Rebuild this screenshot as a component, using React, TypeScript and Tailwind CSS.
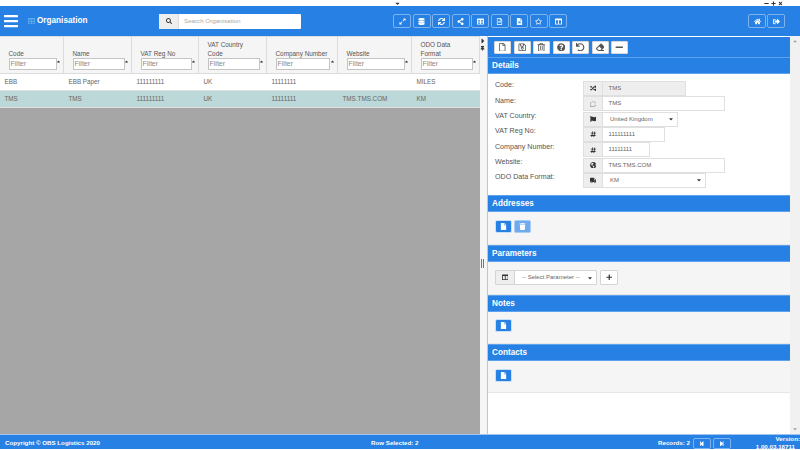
import React from "react";
import {
  FaSearch, FaExpandAlt, FaDatabase, FaSync, FaShareAlt, FaTable, FaRegFileAlt, FaFileAlt, FaRegStar, FaColumns,
  FaHome, FaSignOutAlt, FaRegFile, FaRegSave, FaRegTrashAlt, FaQuestionCircle, FaUndo, FaEraser, FaMinus, FaRandom,
  FaRegComment, FaFlag, FaHashtag, FaGlobeAmericas, FaTruck, FaFile, FaTrash, FaPlus, FaStepBackward, FaStepForward,
  FaCaretDown, FaCaretUp, FaCaretRight, FaThumbtack, FaBars, FaTimes,
} from "react-icons/fa";

const font = "font-['Liberation_Sans',Arial,sans-serif]";

const columns = [
  { w: "w-[64px]", f: "w-[48px]", label: ["Code"] },
  { w: "w-[68px]", f: "w-[52px]", label: ["Name"] },
  { w: "w-[67px]", f: "w-[51px]", label: ["VAT Reg No"] },
  { w: "w-[68px]", f: "w-[52px]", label: ["VAT Country", "Code"] },
  { w: "w-[71px]", f: "w-[54px]", label: ["Company Number"] },
  { w: "w-[74px]", f: "w-[58px]", label: ["Website"] },
  { w: "w-[68px]", f: "w-[52px]", label: ["ODO Data", "Format"] },
];

const rows = [
  { cells: ["EBB", "EBB Paper", "111111111", "UK", "11111111", "", "MILES"], bg: "bg-white" },
  { cells: ["TMS", "TMS", "111111111", "UK", "11111111", "TMS.TMS.COM", "KM"], bg: "bg-[#bdd8d8]" },
];

function TopButton({ children }: { children: React.ReactNode }) {
  return (
    <div className="flex h-[14px] w-[18px] items-center justify-center rounded-[2px] border border-[#7fb3ee] text-[7px] text-white">
      {children}
    </div>
  );
}

function ToolButton({ children }: { children: React.ReactNode }) {
  return (
    <div className="flex h-[13px] w-[17px] items-center justify-center rounded-[1px] border border-[#d8d8d8] bg-white text-[8.5px] text-[#555]">
      {children}
    </div>
  );
}

function SectionBar({ title }: { title: string }) {
  return (
    <div className="flex h-[17px] items-center border-y border-[#5da2ee] bg-[#2780e3] pl-[4px] pt-[1px] text-[8.2px] font-bold text-white">
      {title}
    </div>
  );
}

function BlueButton({ light, children }: { light?: boolean; children: React.ReactNode }) {
  return (
    <div
      className={`flex h-[13px] w-[17px] items-center justify-center rounded-[2px] border text-[7px] text-white ${
        light ? "border-[#a8cdf5] bg-[#6eaaed]" : "border-[#c9dff7] bg-[#2780e3]"
      }`}
    >
      {children}
    </div>
  );
}

function Field({
  label, icon, value, width, grey, select,
}: {
  label: string; icon: React.ReactNode; value: string; width: string; grey?: boolean; select?: boolean;
}) {
  return (
    <div className="flex h-[15.3px] items-center">
      <div className="w-[88px] -translate-y-[3.5px] text-[7.1px] text-[#555]">{label}</div>
      <div className={`flex h-[15px] ${width} border border-[#dfdfdf] ${grey ? "bg-[#eeeeee]" : "bg-white"}`}>
        <div className="flex w-[19px] shrink-0 items-center justify-center border-r border-[#dfdfdf] bg-[#eeeeee] text-[6.5px] text-[#333]">
          {icon}
        </div>
        <div className={`flex flex-1 items-center justify-between text-[6px] text-[#666] ${select ? "pl-[7px] pr-[3px]" : "pl-[5.5px]"}`}>
          <span>{value}</span>
          {select && <FaCaretDown className="text-[6px] text-[#333]" />}
        </div>
      </div>
    </div>
  );
}

export default function App() {
  return (
    <div className={`${font} flex h-[450px] w-[800px] flex-col overflow-hidden bg-white`}>
      <div className="flex h-[6px] items-center justify-between pl-[394px] pr-[17px] text-[#333]">
        <FaCaretDown className="text-[7px]" />
        <div className="flex items-center gap-[2px] text-[5px]">
          <FaMinus /><FaPlus /><FaTimes />
        </div>
      </div>

      <header className="flex h-[30px] items-center bg-[#2780e3] text-white">
        <FaBars className="ml-[4px] h-[16px] w-[14px]" />
        <div className="ml-[10px] flex w-[7px] justify-center text-[8px] text-[#59a8f0]"><FaTable /></div>
        <div className="ml-[2px] w-[122px] text-[8.2px] font-bold">Organisation</div>
        <div className="flex h-[15px] w-[142px] rounded-[1px] bg-white">
          <div className="flex w-[20px] items-center justify-center border-r border-[#ddd] bg-[#eee] text-[6px] text-[#333]">
            <FaSearch />
          </div>
          <div className="flex items-center pl-[5px] text-[6.2px] text-[#aaa]">Search Organisation</div>
        </div>
        <div className="ml-[92px] flex gap-[1.5px]">
          <TopButton><FaExpandAlt /></TopButton>
          <TopButton><FaDatabase /></TopButton>
          <TopButton><FaSync /></TopButton>
          <TopButton><FaShareAlt /></TopButton>
          <TopButton><FaTable /></TopButton>
          <TopButton><FaRegFileAlt /></TopButton>
          <TopButton><FaFileAlt /></TopButton>
          <TopButton><FaRegStar /></TopButton>
          <TopButton><FaColumns /></TopButton>
        </div>
        <div className="ml-[181px] flex gap-[1px]">
          <TopButton><FaHome /></TopButton>
          <TopButton><FaSignOutAlt /></TopButton>
        </div>
      </header>

      <main className="flex h-[398px]">
        <section className="flex w-[480px] flex-col bg-[#a6a6a6]">
          <div className="flex h-[38px] border-b border-t border-[#dcdcdc] bg-[#f5f5f5]">
            {columns.map((c) => (
              <div key={c.label[0]} className={`${c.w} relative flex flex-col justify-end border-r border-[#dcdcdc] pb-[3px] pl-[8.5px]`}>
                {c.label.map((l) => (
                  <div key={l} className="h-[9px] text-[6.4px] leading-[9px] text-[#555] whitespace-nowrap">{l}</div>
                ))}
                <div className={`${c.f} flex h-[12px] items-center border border-[#c4c4c4] bg-white pl-[1px] text-[7px] text-[#8a8a8a]`}>
                  Filter
                </div>
                <FaCaretUp className="absolute bottom-[9px] right-[2px] text-[5px] text-[#333]" />
              </div>
            ))}
          </div>
          {rows.map((r) => (
            <div key={r.cells[0]} className={`flex h-[17px] items-center border-b border-[#dedede] ${r.bg}`}>
              {r.cells.map((cell, i) => (
                <div key={i} className={`${columns[i].w} pl-[4.5px] text-[6.3px] text-[#666]`}>{cell}</div>
              ))}
            </div>
          ))}
        </section>

        <div className="flex w-[8px] flex-col items-center border-r border-[#c4c4c4] bg-[#f5f5f5] pt-[1px] text-[#333]">
          <FaCaretRight className="-translate-x-[1px] text-[8px]" />
          <FaThumbtack className="-translate-x-[1px] mt-[1px] text-[5px]" />
          <div className="-translate-x-[1px] mt-[208px] flex gap-[1px]">
            <div className="h-[9px] w-[1px] bg-[#777]" />
            <div className="h-[9px] w-[1px] bg-[#777]" />
          </div>
        </div>

        <section className="flex flex-1">
          <div className="flex-1 pt-[1px]">
            <div className="flex h-[20px] items-center gap-[2.5px] bg-[#2780e3] pl-[6px]">
              <ToolButton><FaRegFile /></ToolButton>
              <ToolButton><FaRegSave /></ToolButton>
              <ToolButton><FaRegTrashAlt /></ToolButton>
              <ToolButton><FaQuestionCircle /></ToolButton>
              <ToolButton><FaUndo /></ToolButton>
              <ToolButton><FaEraser /></ToolButton>
              <ToolButton><FaMinus /></ToolButton>
            </div>
            <SectionBar title="Details" />
            <div className="h-[121px] bg-white pl-[7px] pt-[7px]">
              <Field label="Code:" icon={<FaRandom />} value="TMS" width="w-[103px]" grey />
              <Field label="Name:" icon={<FaRegComment className="text-[#999]" />} value="TMS" width="w-[142px]" />
              <Field label="VAT Country:" icon={<FaFlag />} value="United Kingdom" width="w-[95px]" select />
              <Field label="VAT Reg No:" icon={<FaHashtag />} value="111111111" width="w-[82px]" />
              <Field label="Company Number:" icon={<FaHashtag />} value="11111111" width="w-[67px]" />
              <Field label="Website:" icon={<FaGlobeAmericas />} value="TMS.TMS.COM" width="w-[142px]" />
              <Field label="ODO Data Format:" icon={<FaTruck />} value="KM" width="w-[123px]" select />
            </div>

            <SectionBar title="Addresses" />
            <div className="flex h-[33px] gap-[1.5px] border-b border-[#e6e6e6] bg-[#f5f5f5] pl-[7px] pt-[8px]">
              <BlueButton><FaFile /></BlueButton>
              <BlueButton light><FaTrash /></BlueButton>
            </div>

            <SectionBar title="Parameters" />
            <div className="flex h-[33px] gap-[3px] border-b border-[#e6e6e6] bg-[#f5f5f5] pl-[7px] pt-[8px]">
              <div className="flex h-[15px] w-[102px] rounded-[1px] border border-[#d4d4d4] bg-white">
                <div className="flex w-[19px] items-center justify-center border-r border-[#d4d4d4] bg-[#eee] text-[6.5px] text-[#333]">
                  <FaColumns />
                </div>
                <div className="flex flex-1 items-center justify-between pl-[7px] pr-[3px] text-[6px] text-[#666]">
                  <span>-- Select Parameter --</span>
                  <FaCaretDown className="text-[6px] text-[#333]" />
                </div>
              </div>
              <div className="flex h-[15px] w-[18px] items-center justify-center rounded-[1px] border border-[#d4d4d4] bg-white text-[6.5px] text-[#333]">
                <FaPlus />
              </div>
            </div>

            <SectionBar title="Notes" />
            <div className="flex h-[32px] border-b border-[#e6e6e6] bg-[#f5f5f5] pl-[7px] pt-[7px]">
              <BlueButton><FaFile /></BlueButton>
            </div>

            <SectionBar title="Contacts" />
            <div className="flex h-[32px] border-b border-[#e6e6e6] bg-[#f5f5f5] pl-[7px] pt-[8px]">
              <BlueButton><FaFile /></BlueButton>
            </div>
          </div>
          <div className="flex w-[10px] flex-col items-center justify-between bg-[#f1f1f1] py-[2px] text-[6px] text-[#a3a3a3]">
            <FaCaretUp />
            <FaCaretDown />
          </div>
        </section>
      </main>

      <footer className="flex h-[15px] items-start border-t border-[#9cc5f2] bg-[#2780e3] pt-[3px] text-[6.2px] font-bold leading-[9px] text-white">
        <div className="w-[366px] pl-[5px]">Copyright © OBS Logistics 2020</div>
        <div className="w-[287px] pl-[5px]">Row Selected: 2</div>
        <div className="w-[40px] pl-[5px] whitespace-nowrap">Records: 2</div>
        <div className="flex gap-[2px]">
          <div className="flex h-[11px] w-[18px] items-center justify-center rounded-[2px] border border-[#7fb3ee] text-[5.5px]"><FaStepBackward /></div>
          <div className="flex h-[11px] w-[18px] items-center justify-center rounded-[2px] border border-[#7fb3ee] text-[5.5px]"><FaStepForward /></div>
        </div>
        <div className="-mt-[3px] flex-1 text-right leading-[8px]">
          <div>Version:</div>
          <div className="whitespace-nowrap pr-[5px]">1.00.03.18711</div>
        </div>
      </footer>
    </div>
  );
}
